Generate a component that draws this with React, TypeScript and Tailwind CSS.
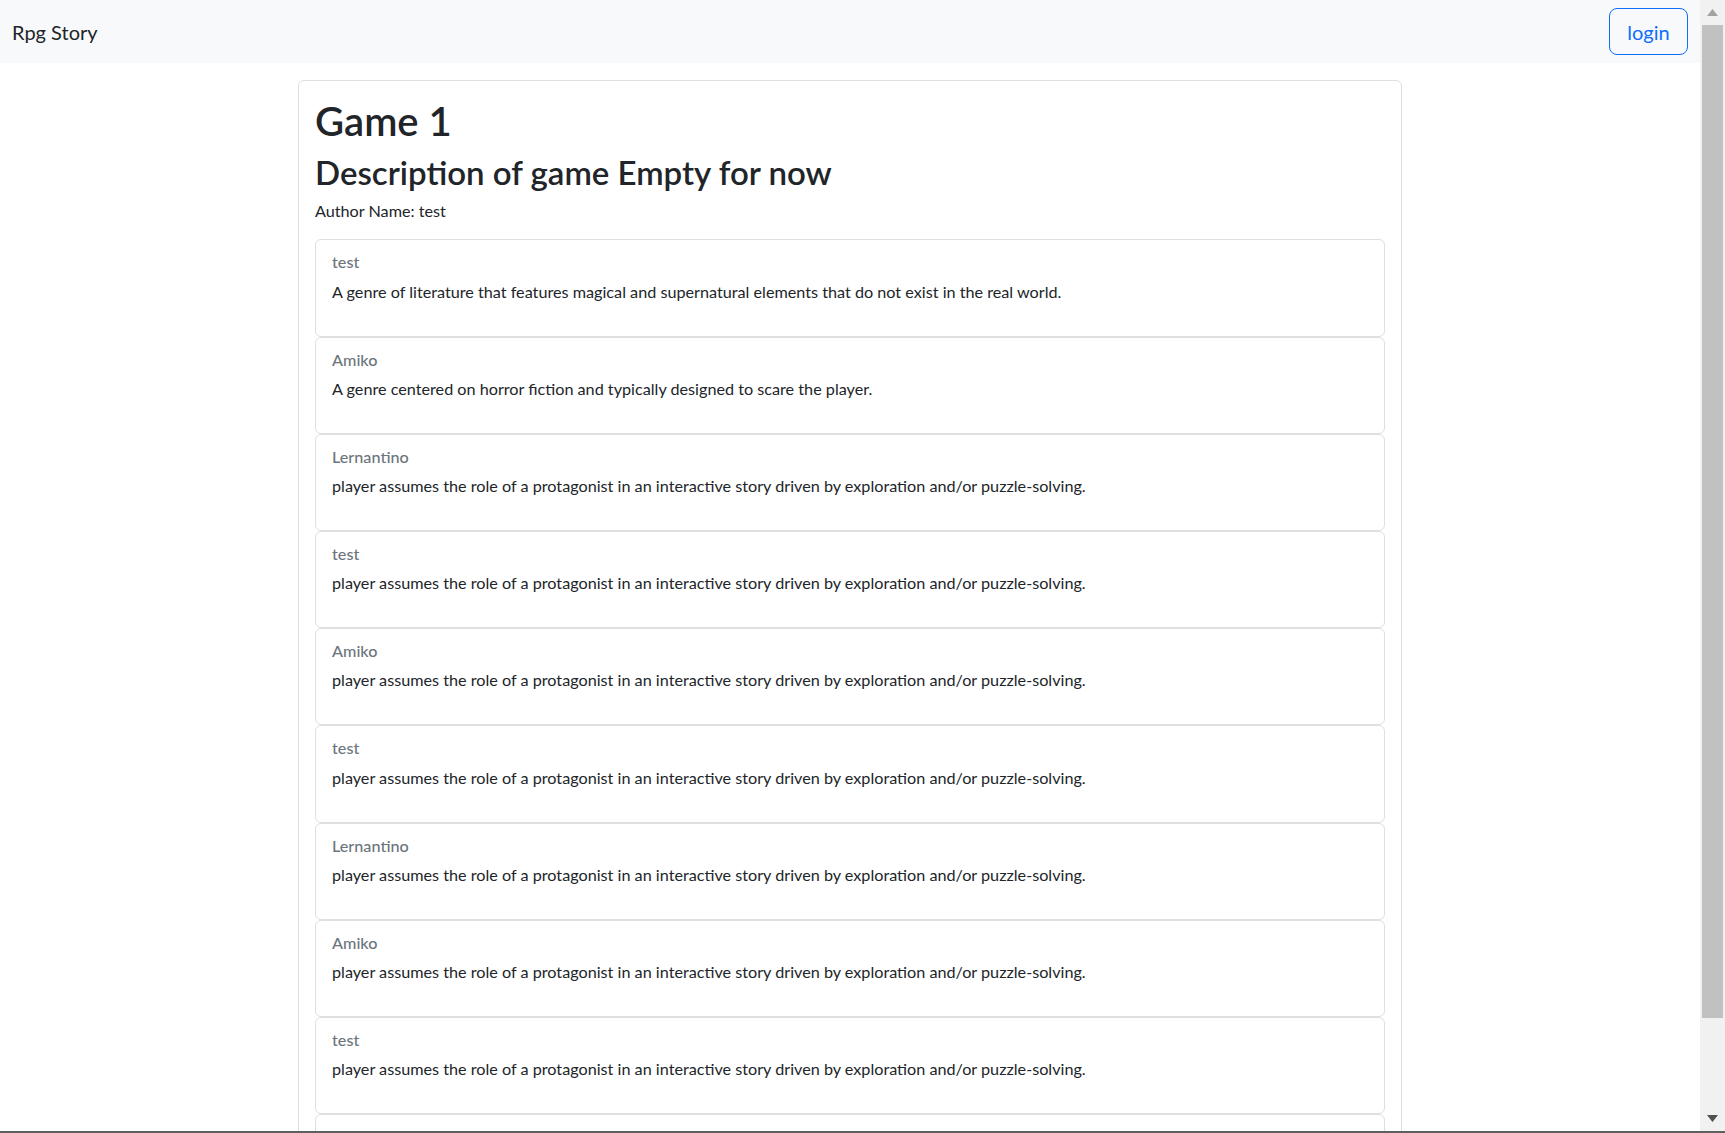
import React from "react";

const P = "player assumes the role of a protagonist in an interactive story driven by exploration and/or puzzle-solving.";
const entries: { name: string; text: string }[] = [
  { name: "test", text: "A genre of literature that features magical and supernatural elements that do not exist in the real world." },
  { name: "Amiko", text: "A genre centered on horror fiction and typically designed to scare the player." },
  { name: "Lernantino", text: P },
  { name: "test", text: P },
  { name: "Amiko", text: P },
  { name: "test", text: P },
  { name: "Lernantino", text: P },
  { name: "Amiko", text: P },
  { name: "test", text: P },
  { name: "Lernantino", text: P },
  { name: "Amiko", text: P },
];

function Scrollbar() {
  return (
    <div className="w-[25px] shrink-0 bg-[#f1f1f1] flex flex-col">
      <div className="h-[25px] flex items-center justify-center">
        <svg width="11" height="7" viewBox="0 0 11 7">
          <polygon points="5.5,0 11,7 0,7" fill="#a3a3a3" />
        </svg>
      </div>
      <div className="h-[993px] mx-[2px] bg-[#c1c1c1]" />
      <div className="flex-1" />
      <div className="h-[25px] flex items-center justify-center">
        <svg width="11" height="7" viewBox="0 0 11 7">
          <polygon points="0,0 11,0 5.5,7" fill="#505050" />
        </svg>
      </div>
    </div>
  );
}

export default function App() {
  return (
    <div className="h-screen flex flex-col bg-white text-[#212529] font-['Lato',sans-serif] text-[16.2px] leading-[24px]">
      <div className="flex-1 min-h-0 flex">
        <div className="flex-1 min-w-0 overflow-hidden">
          <nav className="h-[63px] bg-[#f8f9fa] flex items-center justify-between pl-3 pr-3">
            <span className="text-[20px] leading-[30px]">Rpg Story</span>
            <button className="w-[79px] h-[47px] flex items-center justify-center border border-[#0d6efd] text-[#0d6efd] rounded-[8px] text-[20px] bg-transparent">
              login
            </button>
          </nav>
          <main className="pt-[17px]">
            <div className="mx-auto w-[1104px] border border-[#dfdfdf] rounded-[6px] p-4">
              <h1 className="text-[40px] font-semibold leading-[48px] mb-2">Game 1</h1>
              <h2 className="text-[33px] font-semibold leading-[38.4px] mb-2">Description of game Empty for now</h2>
              <p className="mb-4">Author Name: test</p>
              <div className="flex flex-col">
                {entries.map((e, i) => (
                  <div key={i} className="border border-[#dfdfdf] rounded-[6px] px-4 pt-4 pb-4">
                    <h6 className="-mt-1 mb-2 text-[16.2px] font-medium leading-[19.2px] text-[#6c757d]">{e.name}</h6>
                    <p className="mb-4">{e.text}</p>
                  </div>
                ))}
              </div>
            </div>
          </main>
        </div>
        <Scrollbar />
      </div>
      <div className="h-[2px] shrink-0 bg-[#5f5f5f]" />
    </div>
  );
}
